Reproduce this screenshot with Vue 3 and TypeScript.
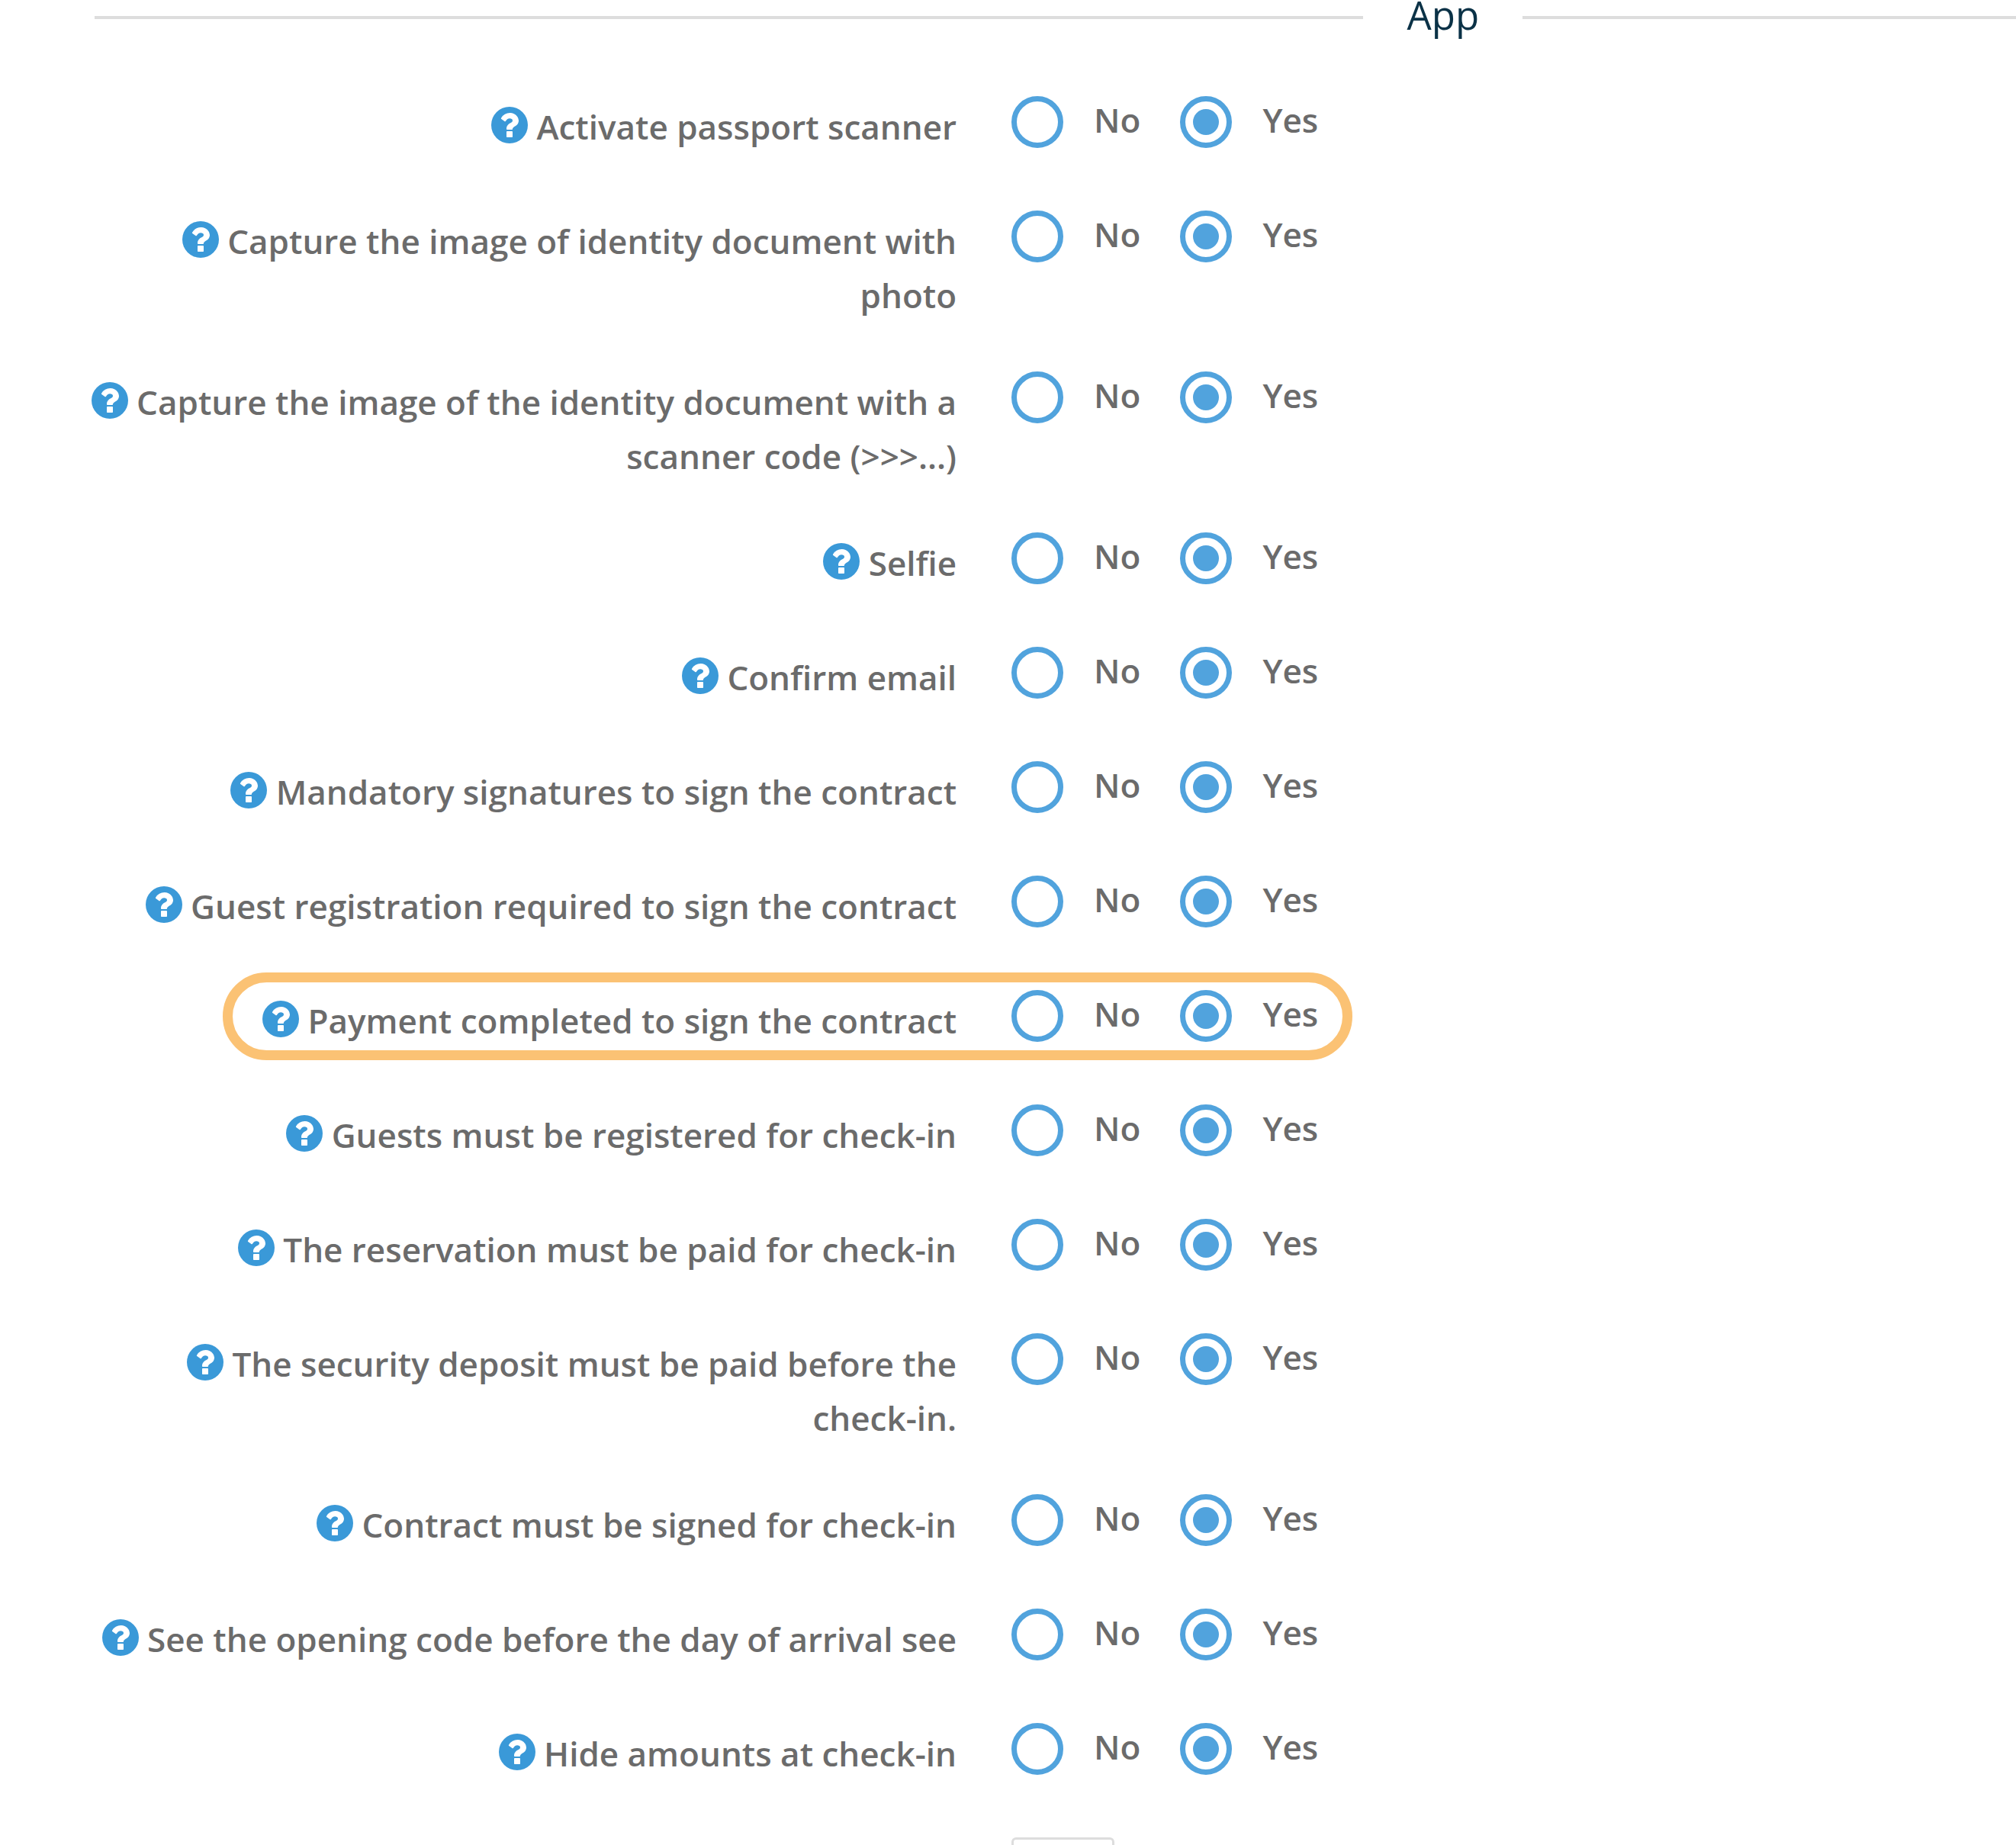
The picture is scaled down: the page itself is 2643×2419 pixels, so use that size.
<script setup lang="ts">
import { reactive, ref } from 'vue'

interface Setting {
  id: string
  label: string
  enabled: 'no' | 'yes'
  highlighted?: boolean
}

const settings = reactive<Setting[]>([
  { id: 'passport-scanner', label: 'Activate passport scanner', enabled: 'yes' },
  { id: 'capture-photo', label: 'Capture the image of identity document with photo', enabled: 'yes' },
  { id: 'capture-code', label: 'Capture the image of the identity document with a scanner code (>>>...)', enabled: 'yes' },
  { id: 'selfie', label: 'Selfie', enabled: 'yes' },
  { id: 'confirm-email', label: 'Confirm email', enabled: 'yes' },
  { id: 'mandatory-signatures', label: 'Mandatory signatures to sign the contract', enabled: 'yes' },
  { id: 'guest-registration', label: 'Guest registration required to sign the contract', enabled: 'yes' },
  { id: 'payment-completed', label: 'Payment completed to sign the contract', enabled: 'yes', highlighted: true },
  { id: 'guests-registered', label: 'Guests must be registered for check-in', enabled: 'yes' },
  { id: 'reservation-paid', label: 'The reservation must be paid for check-in', enabled: 'yes' },
  { id: 'deposit-paid', label: 'The security deposit must be paid before the check-in.', enabled: 'yes' },
  { id: 'contract-signed', label: 'Contract must be signed for check-in', enabled: 'yes' },
  { id: 'opening-code', label: 'See the opening code before the day of arrival see', enabled: 'yes' },
  { id: 'hide-amounts', label: 'Hide amounts at check-in', enabled: 'yes' },
])

const extraValue = ref('')
</script>

<template>
  <main class="page">
    <header class="section-title">
      <span class="rule"></span>
      <h2>App</h2>
      <span class="rule"></span>
    </header>

    <form class="settings">
      <div
        v-for="s in settings"
        :key="s.id"
        class="row"
        :class="{ highlighted: s.highlighted }"
        role="radiogroup"
        :aria-labelledby="s.id"
      >
        <div class="name">
          <button type="button" class="help" aria-label="Help">
            <svg viewBox="0 128 1536 1536" aria-hidden="true">
              <circle cx="768" cy="896" r="768" fill="currentColor" />
              <path
                fill="#fff"
                d="M896 1376v-192q0-14-9-23t-23-9H672q-14 0-23 9t-9 23v192q0 14 9 23t23 9h192q14 0 23-9t9-23zm256-672q0-88-55.500-163T958 425t-170-41q-243 0-371 213-15 24 8 42l132 100q7 6 19 6 16 0 25-12 53-68 86-92 34-24 86-24 48 0 85.500 26t37.500 59q0 38-20 61t-68 45q-63 28-115.500 86.500T640 1020v36q0 14 9 23t23 9h192q14 0 23-9t9-23q0-19 21.500-49.500T972 957q32-18 49-28.500t46-35 44.500-48 28-60.500 12.500-81z"
              />
            </svg>
          </button>
          {{ ' ' }}<span :id="s.id">{{ s.label }}</span>
        </div>
        <div class="choices">
          <label class="choice">
            <input v-model="s.enabled" type="radio" :name="s.id + '-choice'" value="no" />
            <span>No</span>
          </label>
          <label class="choice">
            <input v-model="s.enabled" type="radio" :name="s.id + '-choice'" value="yes" />
            <span>Yes</span>
          </label>
        </div>
      </div>

      <div class="row">
        <input v-model="extraValue" class="short-field" type="text" aria-label="Value" />
      </div>
    </form>
  </main>
</template>

<style>
body {
  background: #fff;
}
</style>

<style scoped>
.page {
  height: 100vh;
  overflow: hidden;
  box-sizing: border-box;
  font-family: 'Open Sans', 'Noto Sans', sans-serif;
  font-size: 44px;
  font-weight: 600;
  color: #6b6b6b;
}

.section-title {
  display: grid;
  grid-template-columns: 18fr auto 7fr;
  gap: 57px;
  height: 126px;
  padding-left: 124px;
}

.section-title h2 {
  margin: 0;
  font-size: 51px;
  font-weight: 400;
  line-height: 38px;
  color: #0b3247;
}

.rule {
  height: 4px;
  margin-top: 21px;
  background: #ddd;
}

.row {
  position: relative;
  display: grid;
  grid-template-columns: 19fr 20fr;
  column-gap: 72px;
  align-items: start;
  min-height: 150px;
  padding-left: 3px;
}

.row.highlighted::after {
  content: '';
  position: absolute;
  top: -23px;
  left: calc(11% + 1px);
  right: calc(33% - 2px);
  box-sizing: border-box;
  height: 115px;
  border: 13px solid #fbc274;
  border-radius: 58px;
  pointer-events: none;
}

.name {
  padding: 5px 0 64px 108px;
  line-height: 71px;
  text-align: right;
}

.help {
  display: inline-flex;
  width: 48px;
  height: 48px;
  padding: 0;
  border: 0;
  background: none;
  color: #3a99d8;
  vertical-align: -5px;
}

.help svg {
  width: 48px;
  height: 48px;
}

.choices {
  display: flex;
  gap: 52px;
}

.choice {
  display: flex;
  align-items: flex-start;
  gap: 40px;
  line-height: 62px;
}

.choice input {
  appearance: none;
  box-sizing: border-box;
  width: 68px;
  height: 68px;
  margin: 0;
  padding: 10px;
  border: 7px solid #51a3dd;
  border-radius: 50%;
  background: #fff;
}

.choice input:checked {
  background: #51a3dd content-box;
}

.short-field {
  grid-column: 2;
  box-sizing: border-box;
  width: 135px;
  height: 110px;
  border: 3px solid #ddd;
  border-radius: 6px;
  font: inherit;
  color: inherit;
}
</style>
